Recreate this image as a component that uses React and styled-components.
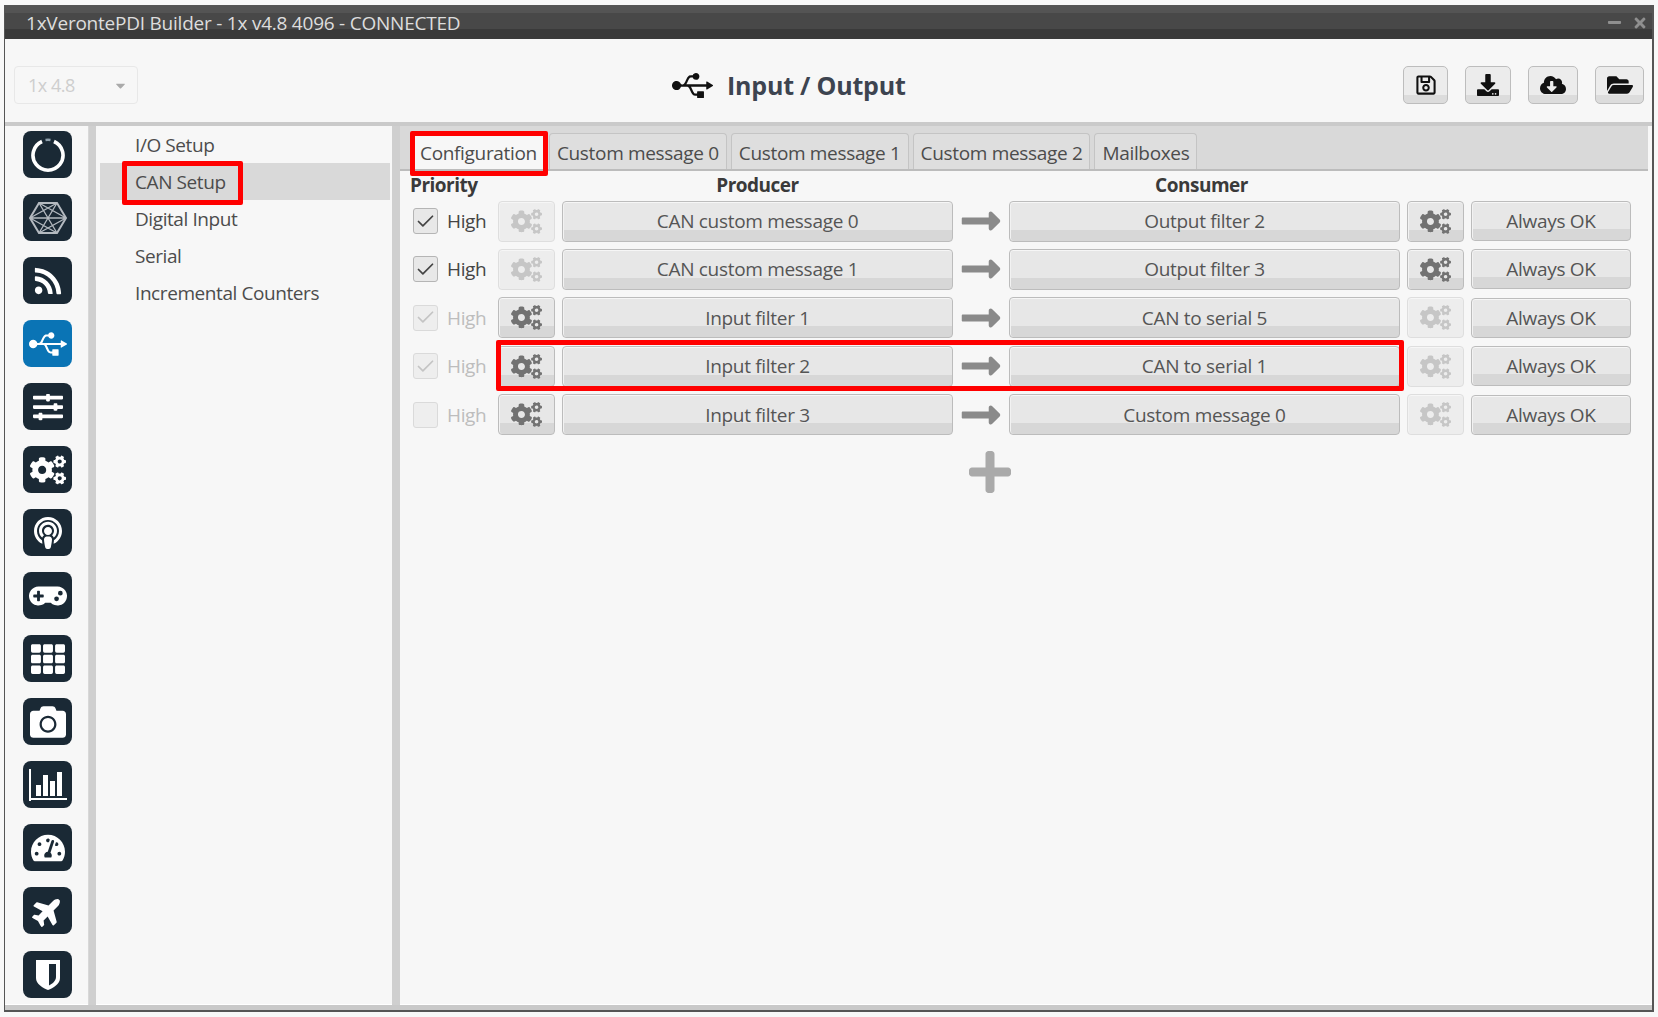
import styled, { createGlobalStyle } from "styled-components"
import { Check } from "lucide-react"
import {
	FaRss, FaUsb, FaSlidersH, FaCogs, FaPodcast, FaGamepad, FaTh, FaCamera, FaTachometerAlt, FaPlane,
	FaRegSave, FaDownload, FaCloudDownloadAlt, FaFolderOpen, FaLongArrowAltRight, FaPlus, FaTimes, FaMinus, FaCaretDown,
} from "react-icons/fa"

const PowerRing = () => (
	<svg width="36" height="36" viewBox="0 0 36 36" fill="none">
		<path d="M12 4.5 A15 15 0 1 0 24 4.5" stroke="#fff" strokeWidth="3.6" />
		<path d="M15.5 3 A15 15 0 0 1 20.5 3" stroke="#8fa0ad" strokeWidth="2.4" />
	</svg>
)

const HexMesh = () => (
	<svg width="38" height="34" viewBox="0 0 38 34" fill="none" stroke="#b4bac0" strokeWidth="1.3">
		<path d="M10 2 H28 L37 17 L28 32 H10 L1 17 Z" strokeWidth="2" />
		<path d="M10 2 L28 32 M28 2 L10 32 M1 17 H37 M10 2 L37 17 M28 2 L1 17 M10 32 L37 17 M28 32 L1 17" />
	</svg>
)

const BarsIcon = () => (
	<svg width="38" height="32" viewBox="0 0 38 32" fill="#fff">
		<rect x="0" y="0" width="2" height="32" />
		<rect x="0" y="29" width="38" height="2" />
		<rect x="7" y="16" width="5" height="11" />
		<rect x="14" y="6" width="5" height="21" />
		<rect x="21" y="12" width="5" height="15" />
		<rect x="28" y="3" width="5" height="24" />
	</svg>
)

const HalfShield = () => (
	<svg width="26" height="32" viewBox="0 0 26 32">
		<path d="M1 1 H25 V19 C25 25 18 29 13 31 C8 29 1 25 1 19 Z" fill="#fff" />
		<path d="M14 5 H21 V18 C21 22 17 25 14 26.5 Z" fill="#1a2935" />
	</svg>
)

const navItems = [
	{ id: "status", icon: <PowerRing /> },
	{ id: "mesh", icon: <HexMesh /> },
	{ id: "feed", icon: <FaRss size={30} /> },
	{ id: "io", icon: <FaUsb size={38} />, active: true },
	{ id: "sliders", icon: <FaSlidersH size={30} /> },
	{ id: "cogs", icon: <FaCogs size={36} /> },
	{ id: "podcast", icon: <FaPodcast size={32} /> },
	{ id: "gamepad", icon: <FaGamepad size={38} /> },
	{ id: "grid", icon: <FaTh size={34} /> },
	{ id: "camera", icon: <FaCamera size={36} /> },
	{ id: "bars", icon: <BarsIcon /> },
	{ id: "gauge", icon: <FaTachometerAlt size={34} /> },
	{ id: "plane", icon: <FaPlane size={32} style={{ transform: "rotate(-45deg)" }} /> },
	{ id: "shield", icon: <HalfShield /> },
]

const menuItems = ["I/O Setup", "CAN Setup", "Digital Input", "Serial", "Incremental Counters"]
const tabs = ["Configuration", "Custom message 0", "Custom message 1", "Custom message 2", "Mailboxes"]

const rows = [
	{ producer: "CAN custom message 0", consumer: "Output filter 2", checked: true, priorityOn: true, leftGear: false, rightGear: true },
	{ producer: "CAN custom message 1", consumer: "Output filter 3", checked: true, priorityOn: true, leftGear: false, rightGear: true },
	{ producer: "Input filter 1", consumer: "CAN to serial 5", checked: true, priorityOn: false, leftGear: true, rightGear: false },
	{ producer: "Input filter 2", consumer: "CAN to serial 1", checked: true, priorityOn: false, leftGear: true, rightGear: false, marked: true },
	{ producer: "Input filter 3", consumer: "Custom message 0", checked: false, priorityOn: false, leftGear: true, rightGear: false },
]

const App = () => {
	return (
		<>
			<GlobalStyle />
			<Window>
				<TitleBar>
					<span>1xVerontePDI Builder - 1x v4.8 4096 - CONNECTED</span>
					<WindowControls>
						<FaMinus size={15} />
						<FaTimes size={16} />
					</WindowControls>
				</TitleBar>

				<TopBar>
					<VersionSelect>
						<span>1x 4.8</span>
						<FaCaretDown size={15} />
					</VersionSelect>
					<PageTitle>
						<FaUsb size={41} />
						<h1>Input / Output</h1>
					</PageTitle>
					<Tools>
						<ToolButton $w={45}><FaRegSave size={22} /></ToolButton>
						<ToolButton $w={46}><FaDownload size={22} /></ToolButton>
						<ToolButton $w={50}><FaCloudDownloadAlt size={26} /></ToolButton>
						<ToolButton $w={49}><FaFolderOpen size={26} /></ToolButton>
					</Tools>
				</TopBar>

				<Body>
					<Nav>
						{navItems.map((item) => (
							<NavTile key={item.id} $active={item.active}>{item.icon}</NavTile>
						))}
					</Nav>
					<Splitter />
					<Menu>
						{menuItems.map((item) => (
							<MenuItem key={item} $selected={item === "CAN Setup"}>
								{item === "CAN Setup" ? <MenuMark>{item}</MenuMark> : item}
							</MenuItem>
						))}
					</Menu>
					<Splitter />
					<Content>
						<TabBar>
							{tabs.map((tab, i) => (
								<Tab key={tab} $active={i === 0}>
									{tab}
									{i === 0 && <TabMark />}
								</Tab>
							))}
						</TabBar>

						<HeaderRow>
							<PriorityHead>Priority</PriorityHead>
							<ColumnHead $col={3}>Producer</ColumnHead>
							<ColumnHead $col={5}>Consumer</ColumnHead>
						</HeaderRow>

						<RowList>
							{rows.map((row) => (
								<Row key={row.producer}>
									<Priority $on={row.priorityOn}>
										<CheckBox $on={row.priorityOn}>{row.checked && <Check size={21} strokeWidth={2} />}</CheckBox>
										High
									</Priority>
									<GearButton $on={row.leftGear}><FaCogs size={31} /></GearButton>
									<WideButton>{row.producer}</WideButton>
									<Arrow><FaLongArrowAltRight size={44} /></Arrow>
									<WideButton>{row.consumer}</WideButton>
									<GearButton $on={row.rightGear}><FaCogs size={31} /></GearButton>
									<StatusButton>Always OK</StatusButton>
									{row.marked && <RowMark />}
								</Row>
							))}
						</RowList>

						<AddRow><FaPlus size={48} /></AddRow>
					</Content>
				</Body>
			</Window>
		</>
	)
}

const GlobalStyle = createGlobalStyle`
	html, body {
		margin: 0;
		background: #f8f8f8;
	}
	body {
		font-family: "Open Sans", "Liberation Sans", sans-serif;
		color: #444;
		overflow: hidden;
	}
`

const Window = styled.div`
	box-sizing: border-box;
	margin: 5px 0 0 4px;
	width: 1650px;
	height: 1007px;
	display: flex;
	flex-direction: column;
	border: 1px solid #555;
	border-right-width: 2px;
	border-bottom-width: 2px;
	background: #f7f7f7;
`

const TitleBar = styled.div`
	height: 33px;
	flex: none;
	display: flex;
	align-items: center;
	justify-content: space-between;
	padding: 0 4px 0 21px;
	background: linear-gradient(#545454 0 20%, #484848 20% 70%, #3a3a3a 70%);
	color: #ddd;
	font-size: 19px;
	letter-spacing: -0.23px;
`

const WindowControls = styled.div`
	display: flex;
	align-items: center;
	gap: 10px;
	color: #8f8f8f;
`

const TopBar = styled.div`
	height: 74px;
	flex: none;
	display: flex;
	align-items: center;
	padding: 9px 8px 0 9px;
	border-bottom: 4px solid #cacaca;
`

const VersionSelect = styled.div`
	box-sizing: border-box;
	width: 124px;
	height: 38px;
	display: flex;
	align-items: center;
	justify-content: space-between;
	padding: 0 9px 0 13px;
	border: 1px solid #e8e8e8;
	border-radius: 4px;
	color: #cecece;
	font-size: 18px;
	letter-spacing: -0.5px;

	svg {
		color: #aaa;
	}
`

const PageTitle = styled.div`
	display: flex;
	align-items: center;
	gap: 14px;
	margin-left: 534px;
	color: #111;

	h1 {
		margin: 0;
		color: #3d4450;
		font-size: 25px;
		font-weight: 700;
		letter-spacing: -0.2px;
	}
`

const Tools = styled.div`
	display: flex;
	gap: 17px;
	margin-left: auto;
`

const ToolButton = styled.button`
	box-sizing: border-box;
	width: ${(p) => p.$w}px;
	height: 38px;
	display: flex;
	align-items: center;
	justify-content: center;
	padding: 0;
	border: 1px solid #bdbdbd;
	border-radius: 5px;
	background: linear-gradient(#ececec 0 78%, #dcdcdc 78%);
	color: #111;
`

const Body = styled.div`
	flex: 1;
	min-height: 0;
	display: flex;
	border-bottom: 5px solid #c9c9c9;
	box-shadow: inset 0 -1px 0 #fff;
`

const Nav = styled.nav`
	box-sizing: border-box;
	width: 84px;
	flex: none;
	display: flex;
	flex-direction: column;
	align-items: center;
	gap: 16px;
	padding: 5px 0 0 2px;
	border-right: 1px solid #d8d8d8;
`

const NavTile = styled.div`
	width: 49px;
	height: 47px;
	flex: none;
	display: flex;
	align-items: center;
	justify-content: center;
	border-radius: 8px;
	background: ${(p) => (p.$active ? "#0a74b5" : "#1a2935")};
	color: #fff;

	&:last-child {
		margin-top: 1px;
	}
`

const Splitter = styled.div`
	width: 7px;
	flex: none;
	margin-right: 4px;
	background: #cfcfcf;
`

const Menu = styled.ul`
	width: 290px;
	flex: none;
	margin: 0;
	padding: 0;
	list-style: none;
	margin-right: 2px;
`

const MenuItem = styled.li`
	height: 37px;
	display: flex;
	align-items: center;
	padding-left: 35px;
	background: ${(p) => (p.$selected ? "#d9d9d9" : "transparent")};
	font-size: 19px;
	letter-spacing: -0.42px;
	color: #4c4c4c;
`

const MenuMark = styled.span`
	position: relative;

	&::after {
		content: "";
		position: absolute;
		inset: -8px -17px -10px -13px;
		border: 5px solid #f00;
		border-radius: 2px;
	}
`

const Content = styled.main`
	flex: 1;
	min-width: 0;
	border-left: 1px solid #cfcfcf;
	margin-left: -4px;
	padding-right: 4px;
`

const TabBar = styled.div`
	height: 45px;
	box-sizing: border-box;
	display: flex;
	align-items: flex-end;
	gap: 4px;
	padding-left: 12px;
	background: #d9d9d9;
	border-bottom: 2px solid #bcbcbc;
`

const Tab = styled.div`
	position: relative;
	box-sizing: border-box;
	height: 36px;
	display: flex;
	align-items: center;
	padding: 3px 7px 0;
	border: 1px solid #c4c4c4;
	border-bottom: 0;
	border-radius: 4px 4px 0 0;
	background: ${(p) => (p.$active ? "#f7f7f7" : "#dedede")};
	font-size: 19px;
	letter-spacing: -0.33px;
	white-space: nowrap;
	color: #4c4c4c;
`

const TabMark = styled.i`
	position: absolute;
	inset: -3px -4px -7px -3px;
	border: 5px solid #f00;
	border-radius: 2px;
`

const HeaderRow = styled.div`
	height: 28px;
	display: grid;
	grid-template-columns: 81px 57px 391px 42px 391px 57px 160px;
	column-gap: 7px;
	align-items: center;
	padding-left: 10px;
`

const PriorityHead = styled.div`
	font-size: 19px;
	font-weight: 700;
	letter-spacing: -0.5px;
	color: #3a3a3a;
`

const ColumnHead = styled.div`
	grid-column: ${(p) => p.$col};
	text-align: center;
	padding-right: ${(p) => (p.$col === 5 ? 6 : 0)}px;
	font-size: 19px;
	font-weight: 700;
	letter-spacing: -0.5px;
	color: #3a3a3a;
`

const RowList = styled.div`
	display: flex;
	flex-direction: column;
	gap: 7.4px;
`

const Row = styled.div`
	position: relative;
	height: 41px;
	display: grid;
	grid-template-columns: 81px 57px 391px 42px 391px 57px 160px;
	column-gap: 7px;
	align-items: center;
	padding-left: 10px;
`

const Priority = styled.label`
	display: flex;
	align-items: center;
	gap: 9px;
	font-size: 19px;
	letter-spacing: -0.35px;
	color: ${(p) => (p.$on ? "#444" : "#bdbdbd")};
`

const CheckBox = styled.span`
	box-sizing: border-box;
	width: 25px;
	height: 26px;
	margin-left: 3px;
	display: flex;
	align-items: center;
	justify-content: center;
	border: 1px solid ${(p) => (p.$on ? "#b5b5b5" : "#dadada")};
	border-radius: 3px;
	background: ${(p) => (p.$on ? "#e8e8e8" : "#eee")};
	color: ${(p) => (p.$on ? "#444" : "#c4c4c4")};
`

const RaisedButton = styled.button`
	box-sizing: border-box;
	height: 41px;
	display: flex;
	align-items: center;
	justify-content: center;
	padding: 0;
	border: 1px solid #bcbcbc;
	border-radius: 4px;
	background: linear-gradient(#e7e7e7 0 72%, #d7d7d7 72%);
	box-shadow: inset 0 1px 0 #f6f6f6, inset 1px 0 0 #f2f2f2;
	font-family: inherit;
	color: #555;
	font-size: 19px;
	letter-spacing: -0.3px;
`

const WideButton = styled(RaisedButton)`
	width: 391px;
`

const StatusButton = styled(RaisedButton)`
	width: 160px;
	height: 40px;
`

const GearButton = styled(RaisedButton)`
	width: 57px;
	color: ${(p) => (p.$on ? "#727272" : "#c6c6c6")};
	background: ${(p) => (p.$on ? "linear-gradient(#e7e7e7 0 72%, #d7d7d7 72%)" : "#ededed")};
	border-color: ${(p) => (p.$on ? "#bcbcbc" : "#dedede")};
`

const Arrow = styled.div`
	display: flex;
	align-items: center;
	justify-content: center;
	color: #8a8a8a;
`

const RowMark = styled.i`
	position: absolute;
	left: 96px;
	width: 908px;
	top: -4px;
	bottom: -6px;
	box-sizing: border-box;
	border: 5px solid #f00;
	border-radius: 2px;
`

const AddRow = styled.div`
	display: flex;
	padding: 14px 0 0 566px;
	color: #aaa;
`

export default App
